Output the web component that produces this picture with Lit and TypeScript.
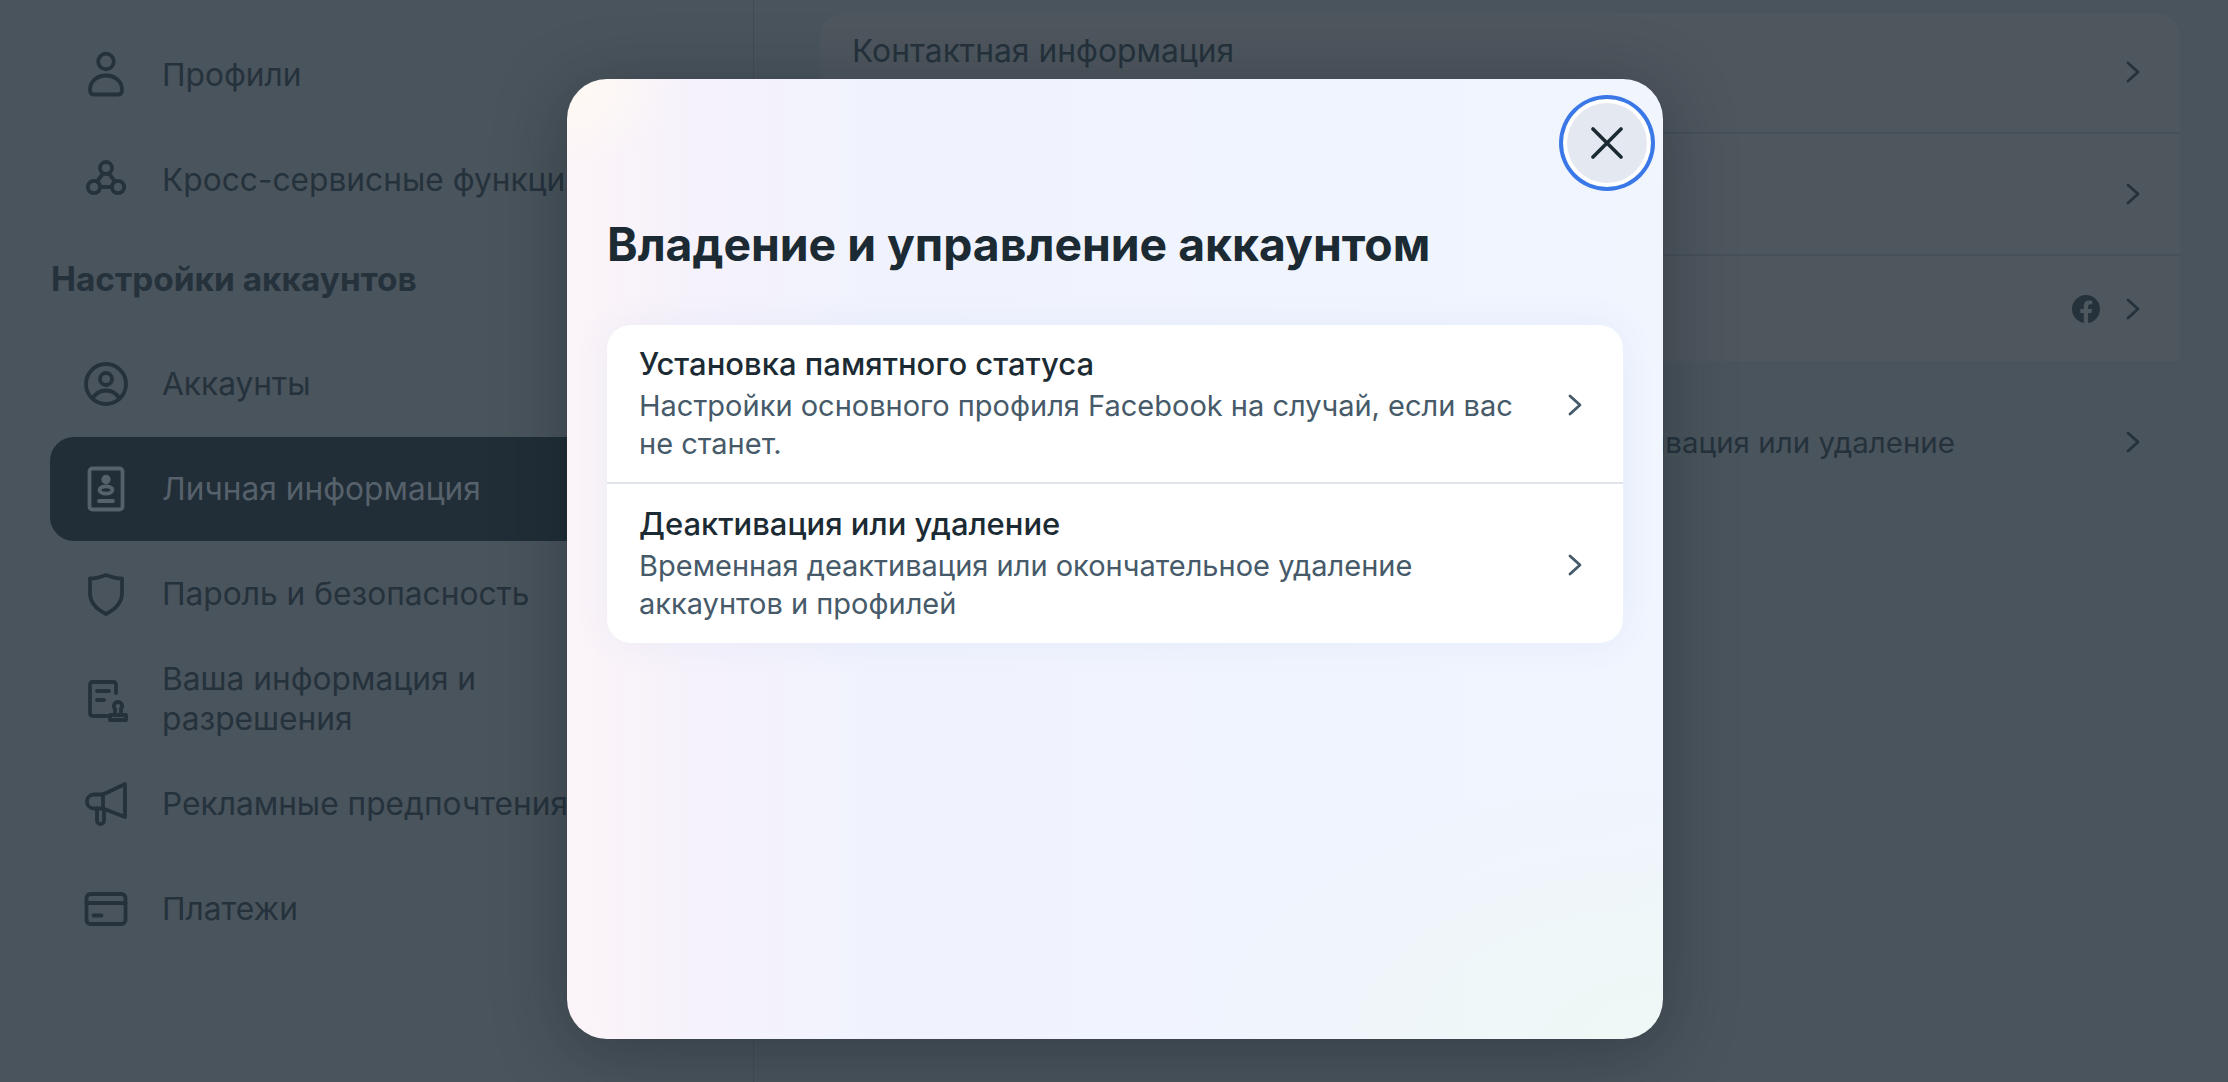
import { LitElement, html, css } from "lit";
import { customElement } from "lit/decorators.js";

const ic = (body: unknown) => html`<svg class="ic" viewBox="0 0 48 48" fill="none" stroke="currentColor" stroke-width="3.800" stroke-linecap="round" stroke-linejoin="round">${body}</svg>`;

const icons = {
  person: ic(html`<svg><circle cx="24" cy="10.500" r="7.800"/><path d="M8 38.500c0-8 7-14 16-14s16 6 16 14c0 3-1.500 5-4 5H12c-2.500 0-4-2-4-5z"/></svg>`),
  nodes: ic(html`<svg><circle cx="24" cy="12" r="6"/><circle cx="12" cy="31" r="6.200"/><circle cx="36" cy="31" r="6.200"/><path d="M21 17.500l-6 8M27 17.500l6 8M18 31h12"/></svg>`),
  account: ic(html`<svg><circle cx="24" cy="24" r="20"/><circle cx="24" cy="19" r="6"/><path d="M10.500 38.500c3-5 8-8 13.500-8s10.500 3 13.500 8"/></svg>`),
  id: ic(html`<svg><rect x="7.500" y="3.500" width="33" height="41" rx="3"/><circle cx="24" cy="14.500" r="2.800" fill="currentColor"/><ellipse cx="24" cy="25" rx="6.500" ry="3.600"/><path d="M17 36h14"/></svg>`),
  shield: ic(html`<svg><path d="M8 8.500c6 0 11-1.500 16-3.500 5 2 10 3.500 16 3.500v14.500c0 10-7 16.500-16 21-9-4.500-16-11-16-21z"/></svg>`),
  doc: ic(html`<svg><path d="M25 41H11c-2 0-3-1-3-3V10c0-2 1-3 3-3h20c2 0 3 1 3 3v8"/><path d="M15 16h12M15 25h7"/><path d="M28 45h16v-5H28zM33 40v-6c-.8-1-1.200-2-1.200-3 0-2.500 1.800-4 4.200-4s4.200 1.500 4.200 4c0 1-.4 2-1.200 3v6"/></svg>`),
  mega: ic(html`<svg><path d="M21 14.500L43 4v33L21 28.500H12c-4 0-7-3-7-7s3-7 7-7z"/><path d="M21 14.500v14"/><path d="M15 28.500v12c0 2 1.500 3.500 3.500 3.500s3.500-1.500 3.500-3.500V30"/></svg>`),
  card: ic(html`<svg><rect x="4.500" y="9" width="39" height="30" rx="4"/><path d="M4.500 18h39M11.500 30.500h8"/></svg>`),
};

const chevron = html`<svg class="chev" viewBox="0 0 14 22" fill="none" stroke="currentColor" stroke-width="2.800" stroke-linecap="round" stroke-linejoin="round"><path d="M2 2l10 9-10 9"/></svg>`;

const menuTop = [
  { i: icons.person, t: "Профили" },
  { i: icons.nodes, t: "Кросс-сервисные функции" },
];
const menuAcc = [
  { i: icons.account, t: "Аккаунты" },
  { i: icons.id, t: "Личная информация", sel: true },
  { i: icons.shield, t: "Пароль и безопасность" },
  { i: icons.doc, t: "Ваша информация и разрешения" },
  { i: icons.mega, t: "Рекламные предпочтения" },
  { i: icons.card, t: "Платежи" },
];
const modalRows = [
  { t: "Установка памятного статуса", s: "Настройки основного профиля Facebook на случай, если вас не станет." },
  { t: "Деактивация или удаление", s: "Временная деактивация или окончательное удаление аккаунтов и профилей" },
];

@customElement("app-root")
export class AppRoot extends LitElement {
  static styles = css`
    :host { display: block; height: 1082px; overflow: hidden; position: relative; font-family: Inter, "Noto Sans", sans-serif; background: #4a545c; color: #25323c; }
    .page { display: flex; height: 1082px; }
    .side { width: 754px; flex: none; box-sizing: border-box; border-right: 1px solid #434c54; padding: 23px 50px 0; }
    .row { display: flex; align-items: center; height: 104px; margin-bottom: 1px; box-sizing: border-box; padding-left: 32px; border-radius: 24px; font-size: 31.700px; line-height: 40px; }
    .ic { width: 48px; height: 48px; flex: none; margin-right: 32px; }
    .row span { max-width: 440px; white-space: nowrap; }
    .row.wrap span { white-space: normal; }
    .row.sel { background: #212e37; color: #56616b; }
    .heading { margin: 22px 0 0 1px; height: 78px; font-size: 33.400px; font-weight: 700; line-height: 50px; white-space: nowrap; color: #25323c; }
    .main { flex: 1; padding: 13px 48px 0 66px; min-width: 0; }
    .group { background: #4e565e; border-radius: 24px 24px 0 0; }
    .g { display: flex; box-sizing: border-box; justify-content: space-between; padding-left: 32px; padding-right: 40px; border-bottom: 2px solid #465059; font-size: 31.800px; white-space: nowrap; }
    .g.last { border-bottom: 0; height: 105px; align-items: center; justify-content: flex-end; }
    .g.first { height: 121px; padding-top: 18px; align-items: flex-start; }
    .g.mid { height: 122px; align-items: center; justify-content: flex-end; }
    .g.first .chev { margin-top: 30px; }
    .g.solo { border: 0; margin-top: 24px; height: 114px; align-items: center; justify-content: flex-end; font-size: 29.500px; }
    .g.solo span { margin-right: 171px; }
    .chev { width: 14px; height: 22px; flex: none; color: #25323c; }
    .fb { width: 28px; height: 28px; margin-right: 26px; flex: none; color: #25323c; }
    .overlay { position: absolute; inset: 0; display: flex; justify-content: center; padding: 79px 0 0 2px; }
    .modal { position: relative; box-sizing: border-box; width: 1096px; height: 960px; padding: 138px 40px 0; border-radius: 40px;
      background:
        radial-gradient(480px 260px at 100% 100%, #eef8f5 0%, rgba(238,248,245,0) 100%),
        radial-gradient(110px 90px at 0 0, #fffaf3 0%, rgba(255,250,243,0) 100%),
        linear-gradient(90deg, #fcf4f8 0%, #f6f2fb 11%, #f0f3fd 28%, #f0f5fe 100%);
      box-shadow: 0 12px 70px rgba(15,22,28,.35); color: #1c2b33; }
    .close { position: absolute; top: 24px; right: 16px; width: 80px; height: 80px; border: 0; padding: 0; border-radius: 50%; background: #e4e8f0; color: #1c2b33; display: flex; align-items: center; justify-content: center; box-shadow: 0 0 0 4px #fff, 0 0 0 8px #3b78e7; }
    .close svg { width: 32px; height: 32px; }
    h1 { margin: 0 0 54px; font-size: 46.300px; line-height: 54px; font-weight: 700; }
    .list { background: #fff; border-radius: 24px; box-shadow: 0 0 36px rgba(90,130,200,.07); }
    .item { display: flex; align-items: center; box-sizing: border-box; height: 159px; padding: 0 32px; border-bottom: 2px solid #dfe4ea; }
    .item:last-child { border-bottom: 0; }
    .txt { flex: 1; min-width: 0; }
    .tt { font-size: 31px; line-height: 38px; font-weight: 500; color: #1c2b33; margin-bottom: 4px; }
    .st { font-size: 29px; line-height: 38px; color: #465a69; width: 890px; }
    .item .chev { color: #465a69; margin: 2px 9px 0 0; }
  `;

  private menuRow(r: { i: unknown; t: string; sel?: boolean }) {
    return html`<div class="row ${r.sel ? "sel" : ""} ${r.t.length > 23 ? "wrap" : ""}">${r.i}<span>${r.t}</span></div>`;
  }

  render() {
    return html`
      <div class="page">
        <nav class="side">
          ${menuTop.map((r) => this.menuRow(r))}
          <div class="heading">Настройки аккаунтов</div>
          ${menuAcc.map((r) => this.menuRow(r))}
        </nav>
        <main class="main">
          <div class="group">
            <div class="g first"><span>Контактная информация</span>${chevron}</div>
            <div class="g mid">${chevron}</div>
            <div class="g last">
              <svg class="fb" viewBox="0 0 24 24" fill="currentColor"><path d="M24 12a12 12 0 1 0-13.900 11.900v-8.400H7.100V12h3V9.400c0-3 1.800-4.700 4.500-4.700 1.300 0 2.700.2 2.700.2v3h-1.500c-1.500 0-2 .9-2 1.900V12h3.400l-.5 3.500h-2.900v8.400A12 12 0 0 0 24 12z"/></svg>
              ${chevron}
            </div>
          </div>
          <div class="g solo"><span>Деактивация или удаление</span>${chevron}</div>
        </main>
      </div>
      <div class="overlay">
        <section class="modal">
          <button class="close" aria-label="Закрыть"><svg viewBox="0 0 32 32" fill="none" stroke="currentColor" stroke-width="3.600" stroke-linecap="round"><path d="M2 2l28 28M30 2L2 30"/></svg></button>
          <h1>Владение и управление аккаунтом</h1>
          <div class="list">
            ${modalRows.map((r) => html`<div class="item"><div class="txt"><div class="tt">${r.t}</div><div class="st">${r.s}</div></div>${chevron}</div>`)}
          </div>
        </section>
      </div>
    `;
  }
}
